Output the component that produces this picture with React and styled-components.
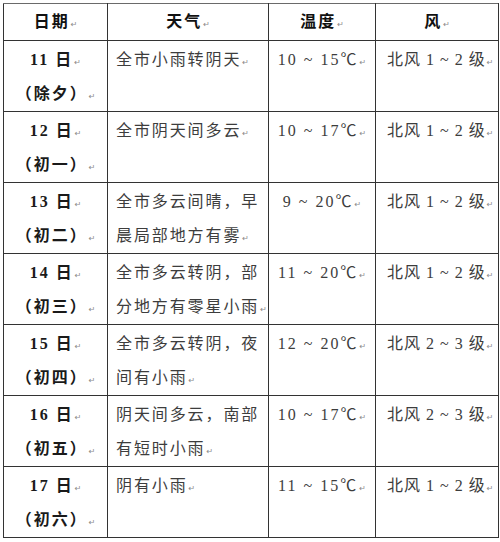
import React from "react";
import styled, { createGlobalStyle } from "styled-components";

const GlobalStyle = createGlobalStyle`
  body {
    margin: 0;
    background: #ffffff;
    font-family: "Liberation Serif", "Noto Sans CJK SC", serif;
  }
`;

const Page = styled.div`
  padding: 3px 0 0 3px;
`;

const Table = styled.table`
  width: 495px;
  border-collapse: collapse;
  table-layout: fixed;
`;

const HeadRow = styled.tr`
  height: 37px;
`;

const HeadCell = styled.th`
  padding: 0;
  border: 1px solid #333;
  border-top-color: #6a6a6a;
  font-size: 16px;
  font-weight: 700;
  line-height: 20px;
  letter-spacing: 2px;
  color: #111;
  text-align: center;
  vertical-align: middle;
`;

const Cell = styled.td`
  padding: 2px 0 0 ${(p) => p.$indent || "0"};
  border: 1px solid #333;
  font-size: 16px;
  line-height: 34px;
  color: ${(p) => (p.$bold ? "#1a1a1a" : "#3d3d3d")};
  font-weight: ${(p) => (p.$bold ? 700 : 400)};
  letter-spacing: ${(p) => p.$spacing || "0"};
  text-align: ${(p) => (p.$indent ? "left" : "center")};
  vertical-align: top;
  white-space: nowrap;
`;

const Line = styled.div`
  height: 34px;
  overflow: hidden;
`;

const Mark = styled.span`
  font-family: "DejaVu Sans", sans-serif;
  font-size: 8px;
  line-height: 1;
  font-weight: 400;
  letter-spacing: 0;
  color: #8a8a8a;
  margin-left: 1px;
`;

const rows = [
  { day: "11 日", lunar: "（除夕）", weather: ["全市小雨转阴天"], temp: "10 ~ 15℃", wind: "北风 1 ~ 2 级" },
  { day: "12 日", lunar: "（初一）", weather: ["全市阴天间多云"], temp: "10 ~ 17℃", wind: "北风 1 ~ 2 级" },
  { day: "13 日", lunar: "（初二）", weather: ["全市多云间晴，早", "晨局部地方有雾"], temp: "9 ~ 20℃", wind: "北风 1 ~ 2 级" },
  { day: "14 日", lunar: "（初三）", weather: ["全市多云转阴，部", "分地方有零星小雨"], temp: "11 ~ 20℃", wind: "北风 1 ~ 2 级" },
  { day: "15 日", lunar: "（初四）", weather: ["全市多云转阴，夜", "间有小雨"], temp: "12 ~ 20℃", wind: "北风 2 ~ 3 级" },
  { day: "16 日", lunar: "（初五）", weather: ["阴天间多云，南部", "有短时小雨"], temp: "10 ~ 17℃", wind: "北风 2 ~ 3 级" },
  { day: "17 日", lunar: "（初六）", weather: ["阴有小雨"], temp: "11 ~ 15℃", wind: "北风 1 ~ 2 级" },
];

function Para({ children, mark = true }) {
  return (
    <Line>
      {children}
      {mark && <Mark>↵</Mark>}
    </Line>
  );
}

export default function App() {
  return (
    <Page>
      <GlobalStyle />
      <Table>
        <colgroup>
          <col style={{ width: 104 }} />
          <col style={{ width: 161 }} />
          <col style={{ width: 107 }} />
          <col style={{ width: 123 }} />
        </colgroup>
        <thead>
          <HeadRow>
            <HeadCell>日期<Mark>↵</Mark></HeadCell>
            <HeadCell>天气<Mark>↵</Mark></HeadCell>
            <HeadCell>温度<Mark>↵</Mark></HeadCell>
            <HeadCell>风<Mark>↵</Mark></HeadCell>
          </HeadRow>
        </thead>
        <tbody>
          {rows.map((r) => (
            <tr key={r.day}>
              <Cell $bold $spacing="2px">
                <Para>{r.day}</Para>
                <Para>{r.lunar}</Para>
              </Cell>
              <Cell $indent="8px" $spacing="1.9px">
                {r.weather.map((w, i) => (
                  <Para key={i} mark={i === r.weather.length - 1}>
                    {w}
                  </Para>
                ))}
              </Cell>
              <Cell $spacing="2px">
                <Para>{r.temp}</Para>
              </Cell>
              <Cell $indent="11px" $spacing="1px">
                <Para>{r.wind}</Para>
              </Cell>
            </tr>
          ))}
        </tbody>
      </Table>
    </Page>
  );
}
